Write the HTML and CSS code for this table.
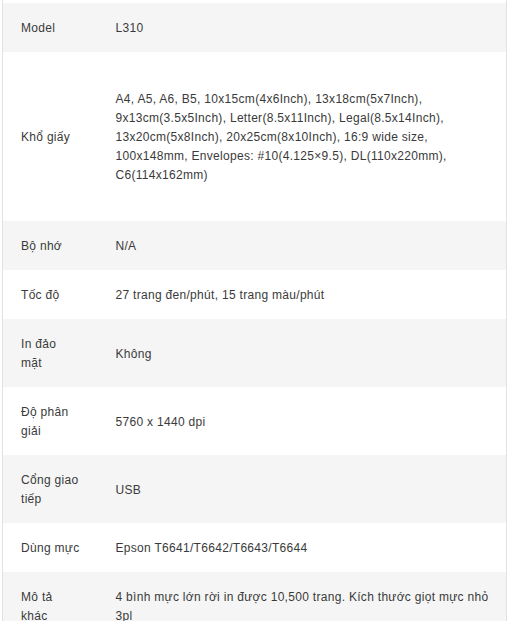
FILE: index.html
```html
<!DOCTYPE html>
<html lang="vi">
<head>
<meta charset="utf-8">
<title>Thông số kỹ thuật L310</title>
<link rel="stylesheet" href="styles.css">
</head>
<body>
<div class="specs">
  <table class="spec-table">
    <colgroup><col class="col-label"><col class="col-value"></colgroup>
    <tbody>
      <tr class="spacer"><td></td><td></td></tr>
      <tr class="alt"><td class="label">Model</td><td class="value">L310</td></tr>
      <tr><td class="label">Khổ giấy</td><td class="value"><p class="para">A4, A5, A6, B5, 10x15cm(4x6Inch), 13x18cm(5x7Inch), 9x13cm(3.5x5Inch), Letter(8.5x11Inch), Legal(8.5x14Inch), 13x20cm(5x8Inch), 20x25cm(8x10Inch), 16:9 wide size, 100x148mm, Envelopes: #10(4.125×9.5), DL(110x220mm), C6(114x162mm)</p></td></tr>
      <tr class="alt"><td class="label">Bộ nhớ</td><td class="value">N/A</td></tr>
      <tr><td class="label">Tốc độ</td><td class="value">27 trang đen/phút, 15 trang màu/phút</td></tr>
      <tr class="alt"><td class="label">In đảo mặt</td><td class="value">Không</td></tr>
      <tr><td class="label">Độ phân giải</td><td class="value">5760 x 1440 dpi</td></tr>
      <tr class="alt"><td class="label">Cổng giao tiếp</td><td class="value">USB</td></tr>
      <tr><td class="label">Dùng mực</td><td class="value">Epson T6641/T6642/T6643/T6644</td></tr>
      <tr class="alt"><td class="label">Mô tả khác</td><td class="value">4 bình mực lớn rời in được 10,500 trang. Kích thước giọt mực nhỏ 3pl</td></tr>
    </tbody>
  </table>
</div>
</body>
</html>
```
FILE: styles.css
```css
html, body {
  margin: 0;
  padding: 0;
  background: #ffffff;
}
body {
  font-family: "Liberation Sans", Arial, sans-serif;
  font-size: 12px;
  color: #3a3a3a;
  letter-spacing: 0.3px;
}
.specs {
  padding-left: 2px;
  width: 505px;
}
.spec-table {
  width: 505px;
  border-collapse: collapse;
  table-layout: fixed;
  border-left: 1px solid #e2e2e2;
  border-right: 1px solid #e2e2e2;
}
.col-label { width: 113px; }
.spec-table td {
  line-height: 19px;
  vertical-align: middle;
  padding: 16px 0 14px;
}
.spec-table .label {
  padding-left: 18px;
  padding-right: 35px;
}
.spec-table .value {
  padding-right: 16px;
}
.spec-table tr.alt td {
  background: #f5f5f5;
}
.spec-table tr.spacer td {
  padding: 0;
  height: 3px;
  line-height: 0;
}
.para {
  margin: 22px 0;
}
```
